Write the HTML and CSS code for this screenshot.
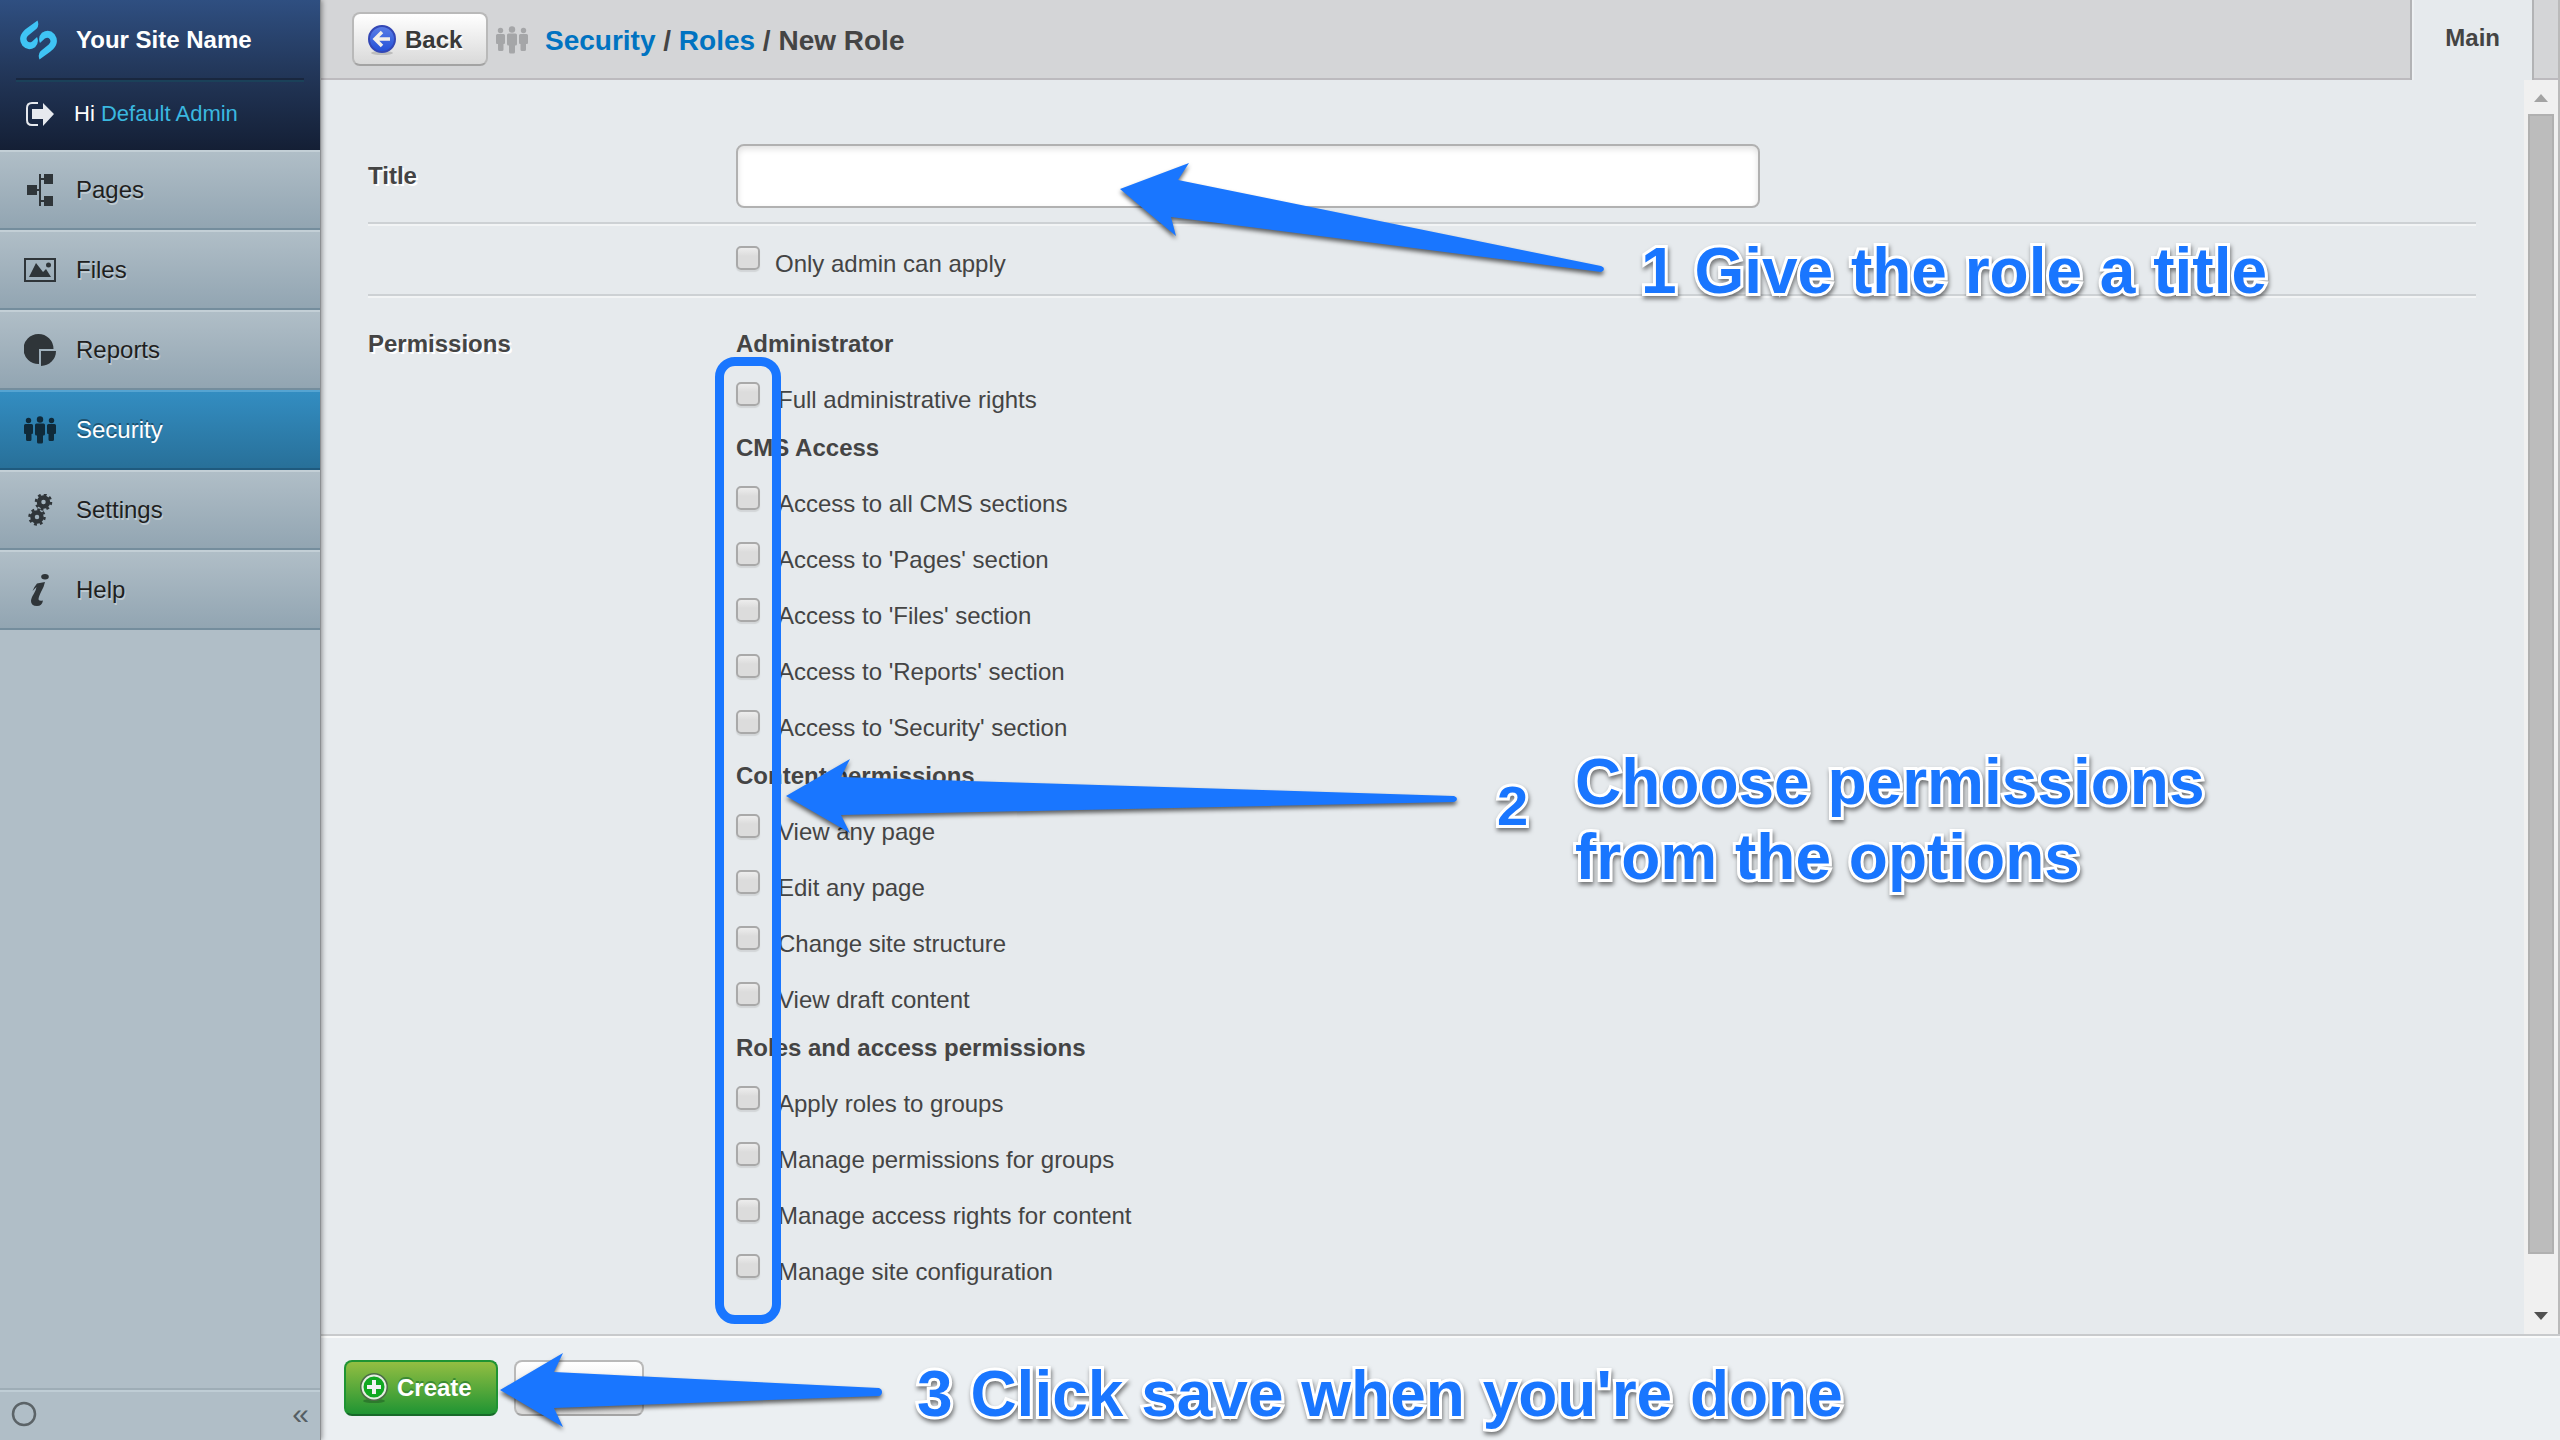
FILE: index.html
```html
<!DOCTYPE html>
<html lang="en">
<head>
<meta charset="utf-8">
<title>New Role - Your Site Name</title>
<link rel="stylesheet" href="styles.css">
</head>
<body>
<svg class="symbols" aria-hidden="true">
  <symbol id="people" viewBox="0 0 32 28">
    <circle cx="4.500" cy="4.500" r="2.700"/><path d="M1.500 8h6q1.500 0 1.500 1.500v7q0 1.500-1 1.500H7.500v5.500q0 1.500-1.500 1.500H3.500Q2 25 2 23.500V18H1q-1 0-1-1.500v-7Q0 8 1.500 8z"/>
    <circle cx="16" cy="3.500" r="3.200"/><path d="M12.500 7.500h7q1.500 0 1.500 1.500v9q0 1.500-1.500 1.500h-.5V26q0 1.500-1.500 1.500h-3Q13 27.500 13 26v-6.500h-.5Q11 19.500 11 18V9q0-1.500 1.500-1.500z"/>
    <circle cx="27.500" cy="4.500" r="2.700"/><path d="M24.500 8h6Q32 8 32 9.500v7q0 1.500-1 1.500h-1v5.500q0 1.500-1.500 1.500H26q-1.500 0-1.500-1.500V18H24q-1 0-1-1.500v-7Q23 8 24.500 8z"/>
  </symbol>
</svg>

<div class="cms">
  <aside class="sidebar">
    <header class="brand">
      <div class="site">
        <svg class="logo" viewBox="0 0 38 40" aria-hidden="true">
          <path d="M18 0q2 5-1 8.500L8.500 15.500q-3 2.500-1 5.500 2 2.500 5 .5l5-4.500q2.500 6-2 10.500Q8 32 2.500 26-3 18 4 10.500q1-1 3-2.500z"/>
          <path d="M20 40q-2-5 1-8.500l8.500-7q3-2.500 1-5.500-2-2.500-5-.5l-5 4.500q-2.500-6 2-10.500 7.500-4.500 13 1.500 5.500 8-1.500 15.500-1 1-3 2.500z"/>
        </svg>
        <span class="site-name">Your Site Name</span>
      </div>
      <div class="login">
        <svg class="logout" viewBox="0 0 28 24" aria-hidden="true">
          <path d="M12 1H6Q1 1 1 6v12q0 5 5 5h6" fill="none" stroke="#e6e9ee" stroke-width="2"/>
          <path d="M6 7h11V1l11 11-11 12v-7H6z" fill="#e6e9ee"/>
        </svg>
        <span>Hi <a href="#profile">Default Admin</a></span>
      </div>
    </header>
    <nav class="menu">
      <a class="item" href="#pages">
        <svg viewBox="0 0 32 32" aria-hidden="true"><path d="M3 11h10v4h2V0h2v4h3V0h9v10h-9V6h-3v20h3v-4h9v10h-9v-4h-3v4h-2V17h-2v4H3z"/></svg>
        <span>Pages</span>
      </a>
      <a class="item" href="#files">
        <svg viewBox="0 0 32 32" aria-hidden="true"><path fill-rule="evenodd" d="M0 4h32v24H0zM2 6v20h28V6z"/><path d="M5 23 12 9l7 9 3-3 5 8z"/><circle cx="24.500" cy="11" r="2.500"/></svg>
        <span>Files</span>
      </a>
      <a class="item" href="#reports">
        <svg viewBox="0 0 32 32" aria-hidden="true"><path d="M29.500 15A15 15 0 1 0 15 30V15z"/><path d="M17 17h15a15 15 0 0 1-15 15z"/></svg>
        <span>Reports</span>
      </a>
      <a class="item current" href="#security">
        <svg viewBox="0 0 32 32" aria-hidden="true"><use href="#people" x="0" y="2" width="32" height="28"/></svg>
        <span>Security</span>
      </a>
      <a class="item" href="#settings">
        <svg viewBox="0 0 32 32" aria-hidden="true">
          <g fill="none" stroke="#2f3539"><circle cx="19.500" cy="8" r="4.500" stroke-width="4.500"/><circle cx="19.500" cy="8" r="7.500" stroke-width="2.500" stroke-dasharray="2.900 2.990"/>
          <circle cx="13" cy="23" r="4.500" stroke-width="4.500"/><circle cx="13" cy="23" r="7.500" stroke-width="2.500" stroke-dasharray="2.900 2.990"/></g>
        </svg>
        <span>Settings</span>
      </a>
      <a class="item" href="#help">
        <svg viewBox="0 0 32 32" aria-hidden="true"><ellipse cx="21" cy="2.700" rx="3.800" ry="2.700"/><path d="M13 9.500 21 8q-1 5-4 10-2.500 5-2.500 7.500 1 2 4.500 1-1 5.500-6 5.500-6 0-6-5 0-3 3-7.500 2-3 2.500-6.500L8.500 17q1.500-4 4.500-7.500z"/></svg>
        <span>Help</span>
      </a>
    </nav>
    <footer class="side-foot">
      <svg class="status" viewBox="0 0 28 28" aria-hidden="true"><circle cx="14" cy="14" r="11" fill="none" stroke="#5b6367" stroke-width="2.500"/></svg>
      <a class="collapse" href="#collapse">«</a>
    </footer>
  </aside>

  <main class="content">
    <header class="toolbar">
      <button class="btn back" type="button">
        <svg class="btn-icon" viewBox="0 0 28 30" aria-hidden="true">
          <defs><linearGradient id="orb" x1="0" y1="0" x2="0" y2="1"><stop offset="0" stop-color="#5c7fe6"/><stop offset="1" stop-color="#2350d8"/></linearGradient></defs>
          <ellipse cx="14" cy="28" rx="11" ry="2" fill="#bdbdbd"/>
          <circle cx="14" cy="14" r="13" fill="url(#orb)" stroke="#3347b5" stroke-width="2"/>
          <path d="M14 7 7 14l7 7M8 14h14" fill="none" stroke="#f3f0ea" stroke-width="3.500"/>
        </svg>
        Back
      </button>
      <svg class="crumb-icon" viewBox="0 0 32 28" aria-hidden="true"><use href="#people" width="32" height="28"/></svg>
      <h1 class="crumbs"><a href="#security">Security</a> / <a href="#roles">Roles</a> / New Role</h1>
      <a class="tab" href="#main">Main</a>
    </header>

    <div class="body">
      <form class="form" id="role">
        <div class="row title-row">
          <label class="name" for="title">Title</label>
          <input class="text" id="title" type="text">
        </div>
        <div class="row apply-row">
          <div class="option"><input type="checkbox" id="only"><label for="only">Only admin can apply</label></div>
        </div>
        <div class="row perms-row">
          <div class="name">Permissions</div>
          <div class="perms">
            <h2>Administrator</h2>
            <div class="option"><input type="checkbox" id="p1"><label for="p1">Full administrative rights</label></div>
            <h2>CMS Access</h2>
            <div class="option"><input type="checkbox" id="p2"><label for="p2">Access to all CMS sections</label></div>
            <div class="option"><input type="checkbox" id="p3"><label for="p3">Access to 'Pages' section</label></div>
            <div class="option"><input type="checkbox" id="p4"><label for="p4">Access to 'Files' section</label></div>
            <div class="option"><input type="checkbox" id="p5"><label for="p5">Access to 'Reports' section</label></div>
            <div class="option"><input type="checkbox" id="p6"><label for="p6">Access to 'Security' section</label></div>
            <h2>Content permissions</h2>
            <div class="option"><input type="checkbox" id="p7"><label for="p7">View any page</label></div>
            <div class="option"><input type="checkbox" id="p8"><label for="p8">Edit any page</label></div>
            <div class="option"><input type="checkbox" id="p9"><label for="p9">Change site structure</label></div>
            <div class="option"><input type="checkbox" id="p10"><label for="p10">View draft content</label></div>
            <h2>Roles and access permissions</h2>
            <div class="option"><input type="checkbox" id="p11"><label for="p11">Apply roles to groups</label></div>
            <div class="option"><input type="checkbox" id="p12"><label for="p12">Manage permissions for groups</label></div>
            <div class="option"><input type="checkbox" id="p13"><label for="p13">Manage access rights for content</label></div>
            <div class="option"><input type="checkbox" id="p14"><label for="p14">Manage site configuration</label></div>
          </div>
        </div>
      </form>
      <div class="scrollbar" aria-hidden="true">
        <svg class="arrow-up" viewBox="0 0 14 8"><path d="M0 8 7 0l7 8z"/></svg>
        <div class="track"><div class="thumb"></div></div>
        <svg class="arrow-down" viewBox="0 0 14 8"><path d="M0 0h14L7 8z"/></svg>
      </div>
    </div>

    <footer class="actions">
      <button class="btn create" type="submit" form="role">
        <svg class="btn-icon" viewBox="0 0 28 30" aria-hidden="true">
          <ellipse cx="14" cy="28" rx="11" ry="2" fill="#2c7a2c"/>
          <circle cx="14" cy="14" r="13" fill="#11a821" stroke="#4d6b47" stroke-width="2"/>
          <circle cx="14" cy="14" r="11.500" fill="none" stroke="#e6efe2" stroke-width="2"/>
          <path d="M14 7v14M7 14h14" stroke="#f2f2f2" stroke-width="4"/>
        </svg>
        Create
      </button>
      <button class="btn cancel" type="button">Cancel</button>
    </footer>
  </main>
</div>

<div class="notes">
  <div class="highlight"></div>
  <svg class="arrows" viewBox="0 0 2560 1440" aria-hidden="true">
    <path d="M1120 189 1189 163l-11 17 423 86q3 1 3 3t-3 3L1171 217l5 19z"/>
    <path d="M786 796 850 759l-9 18 613 19q3 1 3 3t-3 3L841 815l9 18z"/>
    <path d="M500 1390l63-37-9 19 325 16q3 1 3 4t-3 4l-325 12 9 19z"/>
  </svg>
  <p class="note one">1 Give the role a title</p>
  <p class="note two">2</p>
  <p class="note choose">Choose permissions<br>from the options</p>
  <p class="note three">3 Click save when you're done</p>
</div>
</body>
</html>
```
FILE: styles.css
```css
* { box-sizing: border-box; }
body {
  margin: 0;
  font: 24px/32px "Liberation Sans", Arial, sans-serif;
  color: #444;
  background: #e6eaed;
}
a { color: inherit; text-decoration: none; }
.symbols { display: none; }

.cms { display: flex; min-height: 100vh; }

/* Sidebar */
.sidebar {
  position: relative;
  z-index: 1;
  display: flex;
  flex-direction: column;
  flex: 0 0 320px;
  background: #b0bec7;
  box-shadow: 1px 0 0 #8c8f92, 2px 0 5px rgba(0, 0, 0, .4);
}
.brand {
  height: 150px;
  padding: 0 16px;
  background: linear-gradient(#2f4f81, #223658 50%, #141f35);
}
.site {
  display: flex;
  align-items: center;
  gap: 19px;
  height: 80px;
  padding: 2px 0 0 4px;
  border-bottom: 2px solid #19273f;
  box-shadow: 0 2px 0 #1b4159;
}
.logo { width: 37px; height: 40px; fill: #3fc4f4; }
.site-name { font-weight: bold; color: #fff; }
.login {
  display: flex;
  align-items: center;
  gap: 20px;
  height: 68px;
  padding-left: 10px;
  font-size: 22px;
  color: #fff;
}
.login a { color: #3ab8e0; }
.logout { width: 28px; height: 24px; }

.item {
  display: flex;
  align-items: center;
  gap: 20px;
  height: 80px;
  padding-left: 24px;
  border-top: 2px solid #c3cfd6;
  border-bottom: 2px solid #748d9d;
  background: linear-gradient(#b0bec7, #92a5b2);
  color: #1f1f1f;
  text-shadow: 1px 2px 0 #c0ccd3;
}
.item svg { width: 32px; height: 32px; fill: #2f3539; }
.item.current {
  border-top-color: #55a4d2;
  border-bottom-color: #1f5a7e;
  background: linear-gradient(#338dc1, #287099);
  color: #fff;
  text-shadow: 0 -2px 0 #1e5270;
}
.item.current svg { fill: #0f2a3a; }

.side-foot {
  display: flex;
  justify-content: space-between;
  align-items: center;
  height: 52px;
  margin-top: auto;
  padding: 0 11px 2px 10px;
  border-top: 2px solid #9eadb6;
  box-shadow: inset 0 2px 0 #bfcdd5;
}
.status { width: 28px; height: 28px; }
.collapse { font-size: 30px; color: #555e63; }

/* Toolbar */
.content { display: flex; flex: 1; flex-direction: column; min-width: 0; }
.toolbar {
  display: flex;
  align-items: center;
  height: 80px;
  padding: 0 24px 0 32px;
  border-bottom: 2px solid #bcbabe;
  border-right: 2px solid #bababa;
  background: #d4d5d7;
}
.btn {
  display: flex;
  align-items: center;
  gap: 9px;
  height: 56px;
  padding: 0 14px;
  border: 2px solid #b9b9b9;
  border-bottom-color: #a3a3a3;
  border-radius: 8px;
  background: linear-gradient(#fff, #d9d9d9);
  font: bold 24px/32px "Liberation Sans", Arial, sans-serif;
  color: #393939;
  text-shadow: 1px 2px 0 #fff;
}
.btn-icon { width: 28px; height: 30px; }
.back { width: 136px; height: 54px; padding-top: 2px; }
.crumb-icon { width: 32px; height: 28px; margin: 2px 17px 0 8px; fill: #a5a6a8; }
.crumbs { margin: 0; padding-top: 3px; font-size: 28px; line-height: 32px; }
.crumbs a { color: #0073c1; }
.tab {
  align-self: flex-start;
  height: 80px;
  margin-left: auto;
  padding: 0 32px 4px 33px;
  border: solid #b2b3b5;
  border-width: 0 2px;
  background: #e6eaed;
  box-shadow: inset 2px 0 0 #edf0f2;
  font-weight: bold;
  line-height: 76px;
}

/* Form */
.body { display: flex; flex: 1; border-right: 2px solid #bababa; }
.form { flex: 1; padding: 64px 48px 0; }
.row { display: flex; border-bottom: 2px solid #cdd1d4; box-shadow: 0 2px 0 #f2f4f5; }
.name { flex: 0 0 368px; font-weight: bold; text-shadow: 2px 2px 0 #fff; }
.title-row { align-items: center; padding-bottom: 14px; }
.text {
  flex: 0 1 1024px;
  min-width: 0;
  height: 64px;
  padding: 0 14px;
  border: 2px solid #b1b1b1;
  border-radius: 8px;
  background: #fff;
  box-shadow: inset 0 3px 6px rgba(0, 0, 0, .12);
  font: inherit;
}
.apply-row { padding: 8px 0 6px 368px; }
.apply-row .option { gap: 15px; }
.perms-row { padding-top: 24px; border: 0; box-shadow: none; }
.perms-row .name { line-height: 48px; }
h2 { margin: 0; font-size: 24px; line-height: 48px; }
.option { display: flex; align-items: flex-start; gap: 18px; padding: 14px 0 6px; }
.option label { line-height: 36px; }
.option input {
  appearance: none;
  width: 24px;
  height: 24px;
  margin: 0;
  border: 2px solid #a9a9a9;
  border-radius: 5px;
  background: linear-gradient(#ededed, #dcdcdc 40%);
  box-shadow: 0 2px 1px #d2d5d7;
}

.scrollbar {
  display: flex;
  flex-direction: column;
  align-items: center;
  flex: 0 0 34px;
  padding: 14px 4px;
  background: #f0f0f0;
}
.scrollbar svg { width: 14px; height: 8px; }
.arrow-up { fill: #a3a3a3; }
.arrow-down { fill: #505050; }
.track { align-self: stretch; flex: 1; padding: 12px 0 58px; }
.thumb { height: 100%; border: 2px solid #b0b0b0; background: #bcbcbc; }

.actions {
  display: flex;
  gap: 16px;
  height: 106px;
  padding: 24px;
  border-top: 2px solid #c8cacc;
  background: #ebeff2;
  box-shadow: inset 0 2px 0 #f9fafa;
}
.create {
  width: 154px;
  border-color: #1f9433;
  border-bottom-color: #17692a;
  background: linear-gradient(#93be42, #1f9433);
  color: #fff;
  text-shadow: 0 -2px 0 #3a8a33;
}
.cancel { justify-content: center; width: 130px; }

/* Tutorial notes drawn over the page */
.highlight, .arrows, .note { position: absolute; pointer-events: none; z-index: 2; }
.highlight {
  left: 715px;
  top: 357px;
  width: 66px;
  height: 967px;
  border: 9px solid #1976ff;
  border-radius: 20px;
}
.arrows {
  left: 0;
  top: 0;
  width: 2560px;
  height: 1440px;
  fill: #1976ff;
  filter: drop-shadow(0 3px 2px rgba(0, 0, 0, .6));
}
.note {
  margin: 0;
  font-size: 64px;
  font-weight: bold;
  line-height: 75px;
  white-space: nowrap;
  color: #1976ff;
  -webkit-text-stroke: 6px #fff;
  paint-order: stroke fill;
  filter: drop-shadow(1px 3px 2px rgba(0, 0, 0, .5));
}
.one { left: 1641px; top: 234px; }
.two { left: 1497px; top: 768px; font-size: 56px; }
.choose { left: 1575px; top: 745px; }
.three { left: 917px; top: 1357px; }
```
